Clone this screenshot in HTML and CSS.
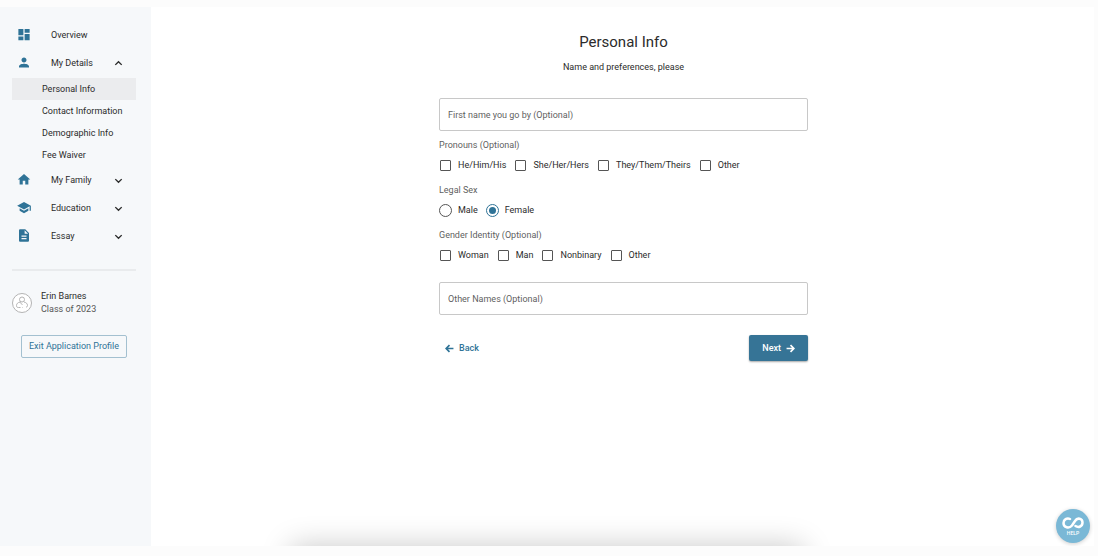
FILE: index.html
```html
<!DOCTYPE html>
<html lang="en">
<head>
    <meta charset="UTF-8">
    <meta name="viewport" content="width=device-width, initial-scale=1.0">
    <title>Personal Info</title>
    <link rel="stylesheet" href="styles.css">
</head>
<body>
    <div class="app">
        <aside class="sidebar">
            <nav class="nav">
                <a class="nav-item" href="#">
                    <svg class="nav-icon" viewBox="0 0 24 24"><path d="M3 13h8V3H3v10zm0 8h8v-6H3v6zm10 0h8V11h-8v10zm0-18v6h8V3h-8z"/></svg>
                    <span class="nav-label">Overview</span>
                </a>
                <button class="nav-item" type="button" aria-expanded="true">
                    <svg class="nav-icon" viewBox="0 0 24 24"><path d="M12 12c2.200 0 4-1.800 4-4s-1.800-4-4-4-4 1.800-4 4 1.800 4 4 4zm0 2c-2.700 0-8 1.300-8 4v2h16v-2c0-2.700-5.300-4-8-4z"/></svg>
                    <span class="nav-label">My Details</span>
                    <svg class="chevron" viewBox="0 0 24 24"><path d="M5 15l7-7 7 7"/></svg>
                </button>
                <div class="subnav">
                    <a class="subnav-item active" href="#">Personal Info</a>
                    <a class="subnav-item" href="#">Contact Information</a>
                    <a class="subnav-item" href="#">Demographic Info</a>
                    <a class="subnav-item" href="#">Fee Waiver</a>
                </div>
                <button class="nav-item" type="button" aria-expanded="false">
                    <svg class="nav-icon" viewBox="0 0 24 24"><path d="M10 20v-6h4v6h5v-8h3L12 3 2 12h3v8z"/></svg>
                    <span class="nav-label">My Family</span>
                    <svg class="chevron" viewBox="0 0 24 24"><path d="M5 9l7 7 7-7"/></svg>
                </button>
                <button class="nav-item" type="button" aria-expanded="false">
                    <svg class="nav-icon" viewBox="0 0 24 24"><path d="M5 13.200v4L12 21l7-3.800v-4L12 17l-7-3.800zM12 3L1 9l11 6 9-4.900V17h2V9L12 3z"/></svg>
                    <span class="nav-label">Education</span>
                    <svg class="chevron" viewBox="0 0 24 24"><path d="M5 9l7 7 7-7"/></svg>
                </button>
                <button class="nav-item" type="button" aria-expanded="false">
                    <svg class="nav-icon" viewBox="0 0 24 24"><path d="M14 2H6c-1.100 0-2 .9-2 2v16c0 1.100.9 2 2 2h12c1.100 0 2-.9 2-2V8l-6-6zm2 16H8v-2h8v2zm0-4H8v-2h8v2zm-3-5V3.500L18.500 9H13z"/></svg>
                    <span class="nav-label">Essay</span>
                    <svg class="chevron" viewBox="0 0 24 24"><path d="M5 9l7 7 7-7"/></svg>
                </button>
            </nav>
            <hr class="divider">
            <div class="profile">
                <svg class="avatar" viewBox="0 0 40 40">
                    <circle cx="20" cy="20" r="19"/>
                    <circle cx="20" cy="13" r="5"/>
                    <path d="M16 18c-4 1-7 3-7 7 0 3 1 4 4 4h4M24 18c4 1 7 3 7 7 0 2-1 3-3 3M16 18c1 3 3 4 5 5M20 29h1"/>
                </svg>
                <div>
                    <div class="profile-name">Erin Barnes</div>
                    <div class="profile-class">Class of 2023</div>
                </div>
            </div>
            <button class="exit-button" type="button">Exit Application Profile</button>
        </aside>

        <main class="main">
            <form class="form">
                <h1 class="title">Personal Info</h1>
                <p class="subtitle">Name and preferences, please</p>

                <input class="text-field" type="text" aria-label="First name you go by (Optional)" placeholder="First name you go by (Optional)">

                <fieldset class="group">
                    <legend class="group-label">Pronouns (Optional)</legend>
                    <div class="options">
                        <label class="option"><input class="checkbox" type="checkbox">He/Him/His</label>
                        <label class="option"><input class="checkbox" type="checkbox">She/Her/Hers</label>
                        <label class="option"><input class="checkbox" type="checkbox">They/Them/Theirs</label>
                        <label class="option"><input class="checkbox" type="checkbox">Other</label>
                    </div>
                </fieldset>

                <fieldset class="group">
                    <legend class="group-label">Legal Sex</legend>
                    <div class="options">
                        <label class="option"><input class="radio" type="radio" name="sex">Male</label>
                        <label class="option"><input class="radio" type="radio" name="sex" checked>Female</label>
                    </div>
                </fieldset>

                <fieldset class="group">
                    <legend class="group-label">Gender Identity (Optional)</legend>
                    <div class="options">
                        <label class="option"><input class="checkbox" type="checkbox">Woman</label>
                        <label class="option"><input class="checkbox" type="checkbox">Man</label>
                        <label class="option"><input class="checkbox" type="checkbox">Nonbinary</label>
                        <label class="option"><input class="checkbox" type="checkbox">Other</label>
                    </div>
                </fieldset>

                <input class="text-field other-names" type="text" aria-label="Other Names (Optional)" placeholder="Other Names (Optional)">

                <div class="actions">
                    <button class="back-button" type="button">
                        <svg class="arrow" viewBox="0 0 16 16"><path d="M15 8H2M8 2L2 8l6 6"/></svg>
                        Back
                    </button>
                    <button class="next-button" type="submit">
                        Next
                        <svg class="arrow" viewBox="0 0 16 16"><path d="M1 8h13M8 2l6 6-6 6"/></svg>
                    </button>
                </div>
            </form>
        </main>

        <button class="help" type="button">
            <svg class="help-logo" viewBox="0 0 44 24"><path d="M16 4C10 1 3 5 3 12c0 9 11 12 17 5l6-9c5-8 15-5 15 3 0 8-8 11-14 7"/></svg>
            <span>HELP</span>
        </button>
    </div>
</body>
</html>
```
FILE: styles.css
```css
* {
    box-sizing: border-box;
}

body {
    margin: 0;
    padding: 7px 4px 10px 0;
    background-color: #fcfcfc;
    color: #2b2b2b;
    font-family: Roboto, Arial, sans-serif;
    font-size: 9px;
    line-height: 13px;
}

button,
input {
    font: inherit;
    color: inherit;
}

button {
    border: none;
    background: none;
    cursor: pointer;
}

a {
    color: inherit;
    text-decoration: none;
}

.app {
    display: flex;
    position: relative;
    min-height: calc(100vh - 17px);
    overflow: hidden;
    background-color: #fff;
}

/* soft shadow along the bottom edge */
.app::after {
    content: "";
    position: absolute;
    top: 100%;
    left: 27%;
    right: 27%;
    height: 40px;
    box-shadow: 0 4px 30px 4px rgba(0, 0, 0, 0.22);
}

.sidebar {
    flex: none;
    width: 151px;
    padding: 14px 15px 14px 12px;
    background-color: #f6f8fa;
}

.nav-item {
    display: flex;
    align-items: center;
    width: 100%;
    height: 28px;
    padding: 0 12px 0 4px;
    text-align: left;
}

.nav-icon {
    width: 16px;
    height: 16px;
    margin-right: 19px;
    padding-bottom: 1px;
    fill: #2f7397;
}

.nav-label {
    flex: 1;
}

.chevron {
    width: 11px;
    height: 11px;
    fill: none;
    stroke: #2b2b2b;
    stroke-width: 3;
}

.subnav {
    padding-top: 1px;
}

.subnav-item {
    display: block;
    padding-left: 30px;
    line-height: 22px;
}

.subnav-item.active {
    background-color: #ebecee;
}

.divider {
    height: 2px;
    margin: 19px 0;
    border: none;
    background-color: #e9ebed;
}

.profile {
    display: flex;
    align-items: center;
    gap: 9px;
}

.avatar {
    width: 20px;
    height: 20px;
    fill: #fff;
    stroke: #b3b3b3;
    stroke-width: 2;
}

.profile-class {
    color: #555;
}

.exit-button {
    display: block;
    width: 106px;
    height: 23px;
    margin: 19px auto 0 9px;
    padding: 0;
    border: 1px solid #a3c0d0;
    border-radius: 2px;
    color: #2f7397;
    white-space: nowrap;
}

.main {
    flex: 1;
    padding: 26px 14px 26px 16px;
}

.form {
    max-width: 369px;
    margin: 0 auto;
}

.title {
    margin: 0;
    font-size: 15px;
    font-weight: 400;
    line-height: 18px;
    text-align: center;
}

.subtitle {
    margin: 10px 0 24px;
    text-align: center;
}

.text-field {
    display: block;
    width: 100%;
    height: 33px;
    padding: 0 8px;
    border: 1px solid #c8c8c8;
    border-radius: 2px;
    background-color: #fff;
}

.text-field::placeholder {
    color: #5f5f5f;
    opacity: 1;
}

.group {
    min-width: 0;
    margin: 8px 0 0;
    padding: 0;
    border: none;
}

.group-label {
    padding: 0;
    color: #5f5f5f;
}

.options {
    display: flex;
    flex-wrap: wrap;
    gap: 8px;
    padding: 7px 0 4px;
}

.option {
    display: flex;
    align-items: center;
    gap: 6px;
}

.checkbox,
.radio {
    appearance: none;
    flex: none;
    border: 1px solid #555;
    background-color: #fff;
}

.checkbox {
    width: 11px;
    height: 11px;
    margin: 0 1px;
    border-radius: 1px;
}

.checkbox:checked {
    background-color: #2f7397;
}

.radio {
    width: 13px;
    height: 13px;
    margin: 0;
    border-radius: 50%;
}

.radio:checked {
    border-color: #2f7397;
    background-color: #2f7397;
    background-clip: content-box;
    padding: 2px;
}

.other-names {
    margin-top: 16px;
}

.actions {
    display: flex;
    justify-content: space-between;
    margin-top: 20px;
}

.back-button,
.next-button {
    display: flex;
    align-items: center;
    gap: 5px;
    height: 26px;
    font-weight: 500;
}

.back-button {
    padding: 0 6px;
    color: #2f7397;
}

.next-button {
    padding: 0 13px;
    border-radius: 2px;
    background-color: #367496;
    box-shadow: 0 1px 2px rgba(0, 0, 0, 0.35);
    color: #fff;
}

.arrow {
    width: 9px;
    height: 9px;
    fill: none;
    stroke: currentColor;
    stroke-width: 3;
}

.help {
    display: flex;
    flex-direction: column;
    align-items: center;
    justify-content: center;
    gap: 1px;
    position: absolute;
    right: 4px;
    bottom: 3px;
    z-index: 1;
    width: 34px;
    height: 34px;
    padding: 0;
    border-radius: 50%;
    background-color: #7ab8d6;
    box-shadow: 0 1px 4px rgba(0, 0, 0, 0.2);
    color: #fff;
    font-size: 5px;
    font-weight: 500;
    line-height: 6px;
}

.help-logo {
    width: 22px;
    height: 12px;
    fill: none;
    stroke: #fff;
    stroke-width: 5;
    stroke-linecap: round;
}
```
